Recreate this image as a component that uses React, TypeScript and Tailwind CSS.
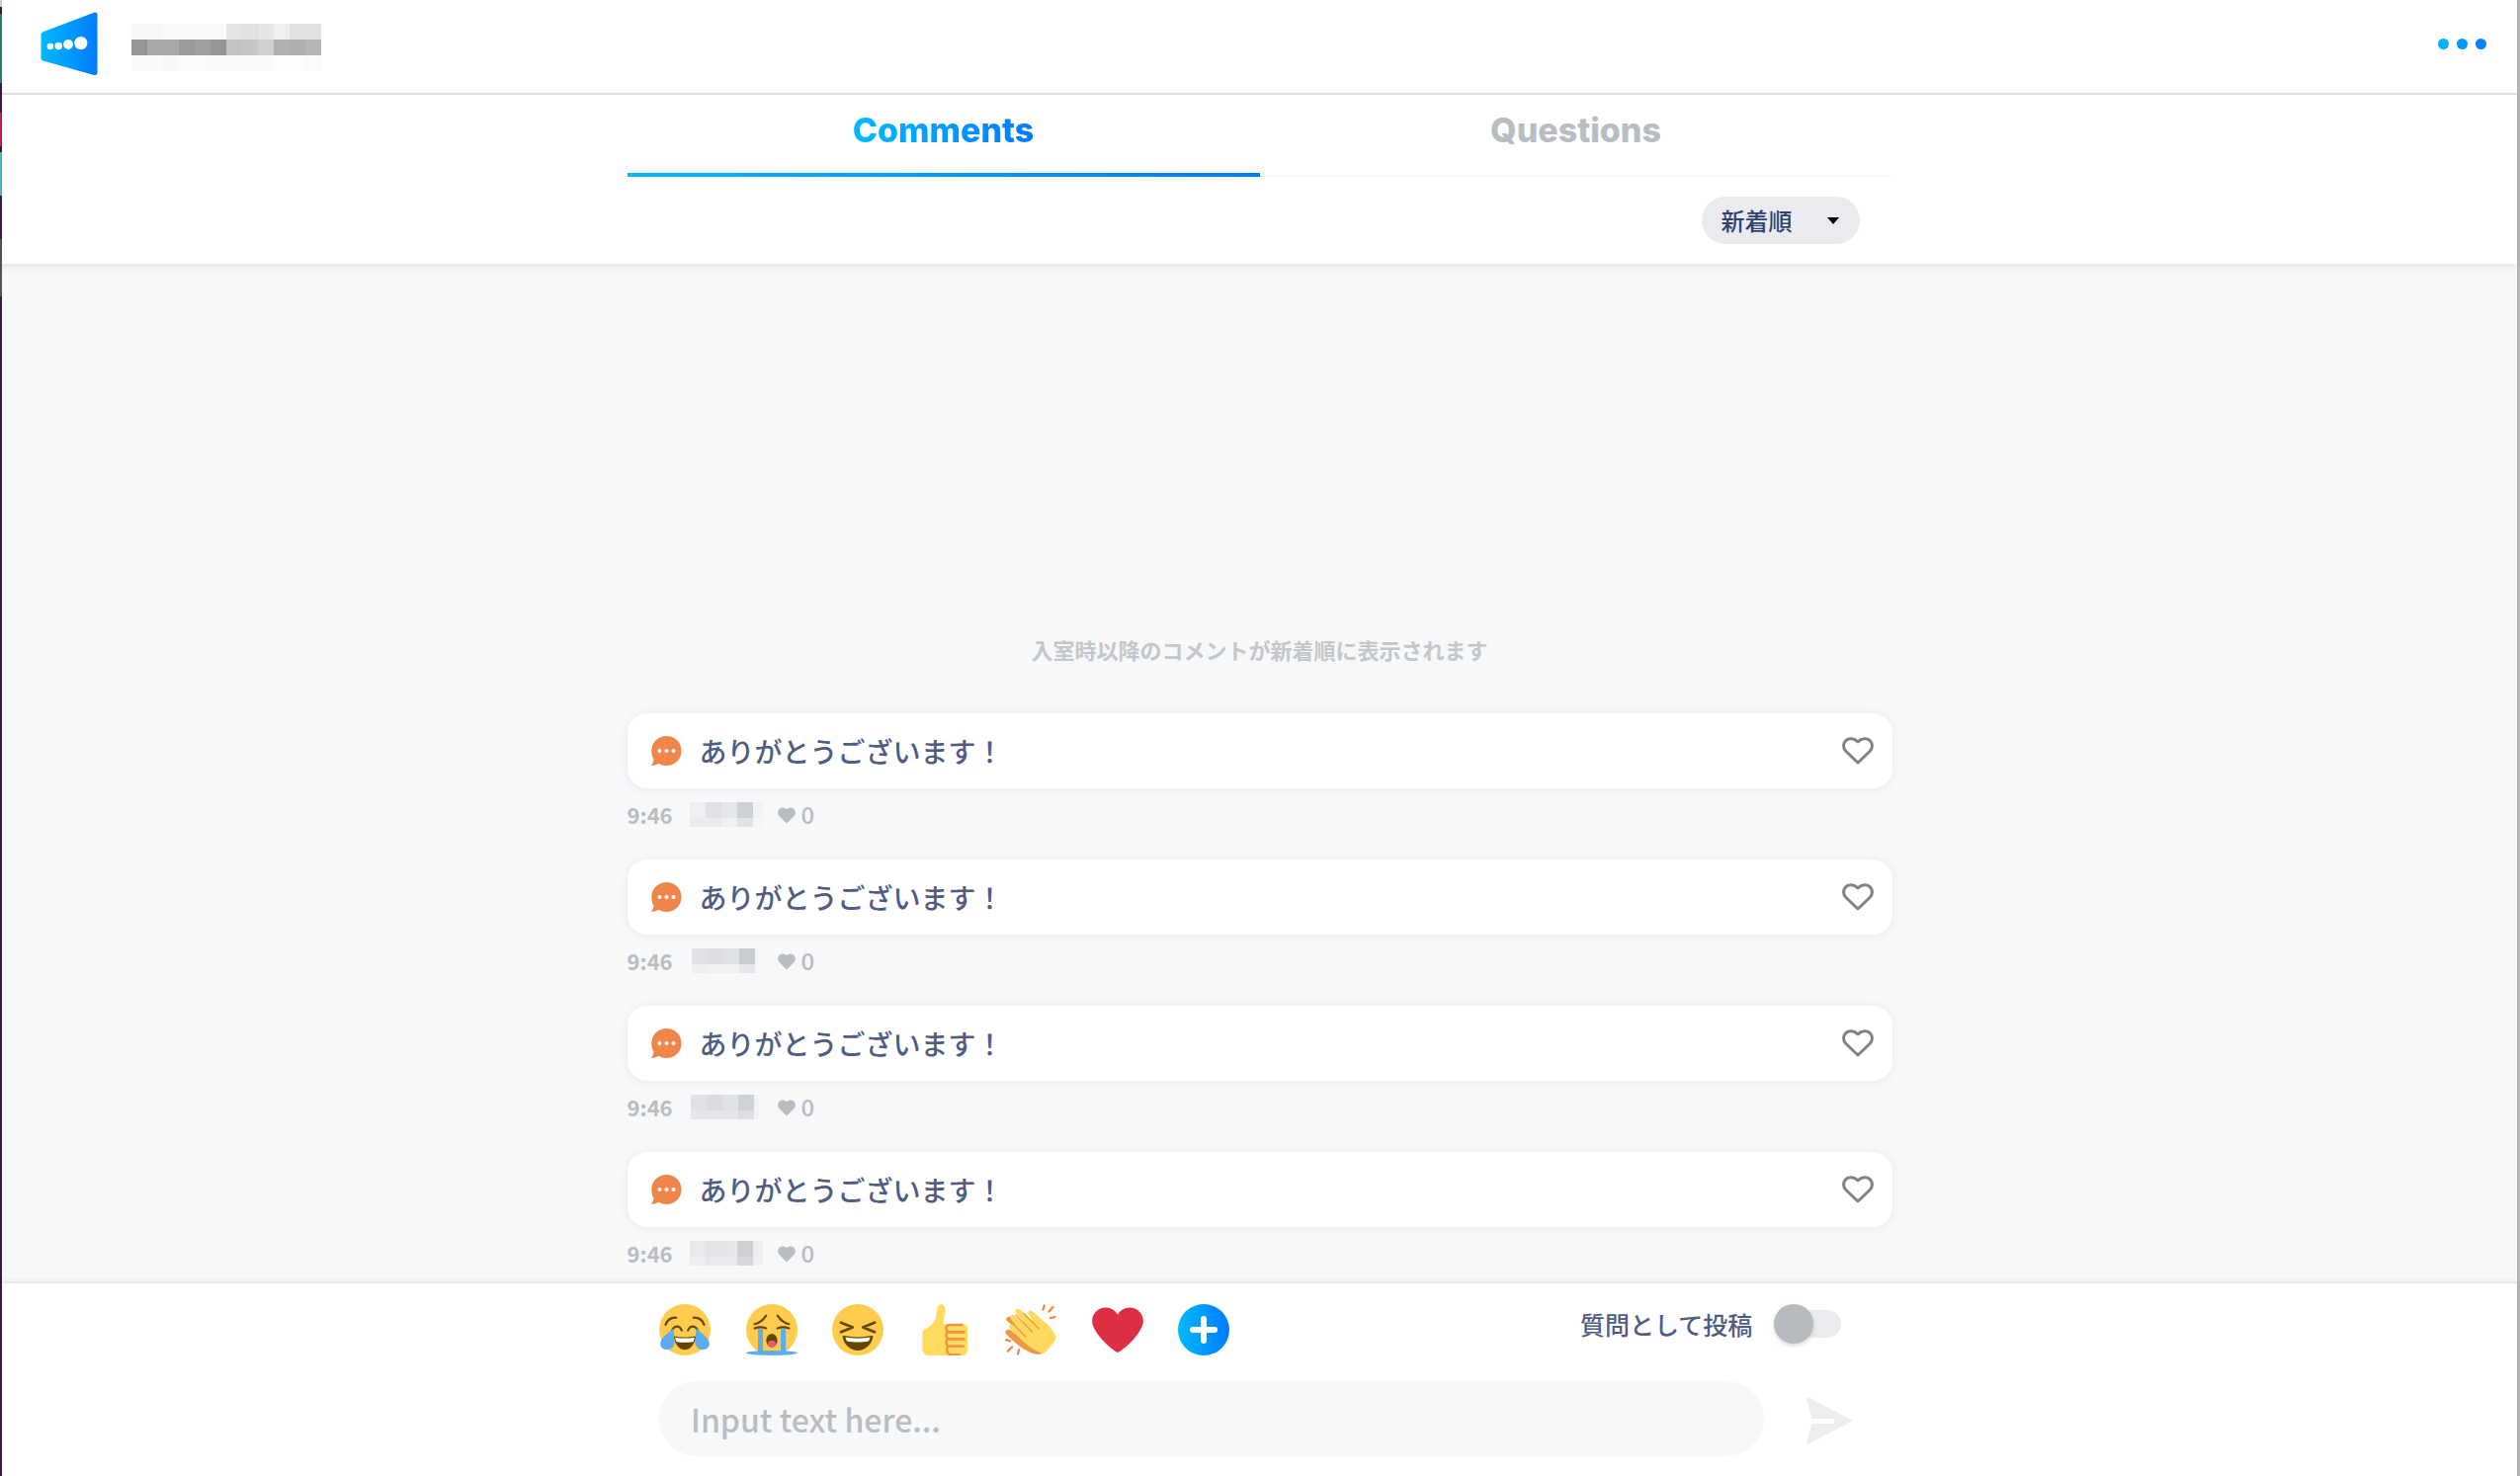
import React from 'react';

const jp = { fontFamily: '"Noto Sans CJK JP", "Noto Sans", sans-serif' };

const headerMosaic = [
  ['#f7f7f7', '#f7f7f7', '#f9f9f9', '#fafafa', '#fafafa', '#f9f9f9', '#e5e5e5', '#e2e2e2', '#e6e6e6', '#f0f0f0', '#e2e2e2', '#e2e2e2'],
  ['#959595', '#a9a9a9', '#a9a9a9', '#9b9b9b', '#a0a0a0', '#959595', '#c3c3c3', '#c6c6c6', '#d0d0d0', '#b0b0b0', '#aeaeae', '#b6b6b6'],
  ['#fafafa', '#fafafa', '#f8f8f8', '#fbfbfb', '#fbfbfb', '#fafafa', '#fafafa', '#fafafa', '#fafafa', '#fdfdfd', '#fdfdfd', '#fbfbfb'],
];

const metaMosaics = [
  { offset: 0, width: 74, rows: [['#eeeff1', '#dfe1e4', '#e6e7ea', '#cdd0d4', '#f1f2f4'], ['#e9eaed', '#e9eaed', '#eff0f2', '#e0e2e5', '#f4f5f7']] },
  { offset: 2, width: 68, rows: [['#e0e2e5', '#dcdee2', '#dfe1e4', '#c9ccd0', '#f3f4f6'], ['#eceef0', '#f0f1f3', '#f0f1f3', '#e6e7ea', '#f5f6f8']] },
  { offset: 1, width: 69, rows: [['#e0e2e5', '#dadce0', '#e0e2e5', '#ced1d5', '#f2f3f5'], ['#e4e6e9', '#e4e6e9', '#e4e6e9', '#dcdee2', '#f2f3f5']] },
  { offset: 0, width: 74, rows: [['#e8e9ec', '#e3e5e8', '#e6e7ea', '#ccd0d4', '#eceef0'], ['#eceef0', '#e8e9ec', '#e8e9ec', '#d6d8dc', '#eff0f2']] },
];

function Mosaic({ rows, cell, className }: { rows: string[][]; cell: number; className?: string }) {
  return (
    <div className={className}>
      {rows.map((row, i) => (
        <div key={i} className="flex">
          {row.map((c, j) => (
            <div key={j} className="shrink-0" style={{ width: cell, height: cell, background: c }} />
          ))}
        </div>
      ))}
    </div>
  );
}

function Logo() {
  return (
    <svg width="59" height="65" viewBox="0 0 60 66" className="shrink-0">
      <defs>
        <linearGradient id="logoGrad" x1="0" x2="1" y1="0" y2="0">
          <stop offset="0" stopColor="#00b9ff" />
          <stop offset="1" stopColor="#007bff" />
        </linearGradient>
      </defs>
      <path d="M2.500 20.500 L55 .6 Q58.500 0 58.500 3 V62.500 Q58.500 65.700 55 65 L2.500 50.300 Q0.500 49.500 0.500 47.500 V23 Q0.500 21.300 2.500 20.500 Z" fill="url(#logoGrad)" />
      <circle cx="10" cy="35.500" r="3.300" fill="#fff" />
      <circle cx="18.500" cy="35" r="3.800" fill="#fff" />
      <circle cx="28.500" cy="33.500" r="5" fill="#fff" />
      <circle cx="41.500" cy="32" r="6.700" fill="#fff" />
    </svg>
  );
}

function BubbleIcon() {
  return (
    <svg width="31" height="30" viewBox="0 0 31 30" className="shrink-0">
      <path d="M15.500 0 C24 0 30.500 6.500 30.500 15 C30.500 23.500 24 30 15.500 30 C12.500 30 9.800 29.200 7.500 27.800 C5.500 29 3 29.700 0 30 C1.500 28 2.200 25.800 2.500 23.500 C1 21.300 0.300 18.300 0.300 15 C0.300 6.500 7 0 15.500 0 Z" fill="#f0854a" />
      <circle cx="8.500" cy="15" r="2" fill="#fff" />
      <circle cx="15.500" cy="15" r="2" fill="#fff" />
      <circle cx="22.500" cy="15" r="2" fill="#fff" />
    </svg>
  );
}

function HeartOutline() {
  return (
    <svg width="32" height="28" viewBox="0 0 32 28" className="shrink-0">
      <path d="M16 26 L4 14.500 C0.500 11 1 6 4 3.500 C7 1 12 1 16 4.800 C20 1 25 1 28 3.500 C31 6 31.500 11 28 14.500 Z" fill="none" stroke="#7e8389" strokeWidth="3" strokeLinejoin="round" />
    </svg>
  );
}

function SmallHeart() {
  return (
    <svg width="18" height="17" viewBox="0 0 18 17" className="mt-[2px] shrink-0">
      <path d="M9 16.500 L1.500 9 C-0.500 6.500 0 3 2 1.500 C4 0 7 0 9 2.500 C11 0 14 0 16 1.500 C18 3 18.500 6.500 16.500 9 Z" fill="#b8bdc3" />
    </svg>
  );
}

function JoyEmoji() {
  return (
    <svg width="52" height="52" viewBox="0 0 36 36">
      <circle cx="18" cy="18" r="18" fill="#ffcc4d" />
      <path d="M11 22.500c2.300.5 4.500.7 7 .7s4.700-.2 7-.7c.5 0 .8.300.7.900C25 28 22 32 18 32s-7-4-7.700-8.600c-.1-.6.200-.9.700-.9z" fill="#664500" />
      <path d="M11.300 23.300c2.200.4 4.300.6 6.700.6s4.500-.2 6.700-.6c0 1.200-.4 2.300-.8 3.100-1.800.4-3.700.5-5.900.5s-4.100-.1-5.900-.5c-.4-.8-.8-1.900-.8-3.100z" fill="#fff" />
      <path d="M4.500 14.500C5.500 11.500 8 9.300 12 9.500M31.500 14.500C30.500 11.500 28 9.300 24 9.500" fill="none" stroke="#664500" strokeWidth="1.500" strokeLinecap="round" />
      <path d="M9 18.500c1-2 2.300-2.800 3.500-2.800s2.500.8 3.300 2.800M20.200 18.500c.8-2 2.100-2.800 3.300-2.800s2.500.8 3.500 2.800" fill="none" stroke="#664500" strokeWidth="1.500" strokeLinecap="round" />
      <path d="M10 17c-3.500 3-9.200 7-9.200 10.700C.8 30.500 3 32 5.500 32s5.200-1.800 5.200-5c0-3-.4-7-.7-10z" fill="#5dadec" />
      <path d="M26 17c3.500 3 9.200 7 9.200 10.700 0 2.800-2.200 4.300-4.700 4.300s-5.200-1.800-5.200-5c0-3 .4-7 .7-10z" fill="#5dadec" />
    </svg>
  );
}

function SobEmoji() {
  return (
    <svg width="52" height="52" viewBox="0 0 36 36">
      <circle cx="18" cy="18" r="18" fill="#ffcc4d" />
      <path d="M6 14c3.500-.8 6-3 8-6M30 14c-3.500-.8-6-3-8-6" fill="none" stroke="#664500" strokeWidth="1.500" strokeLinecap="round" />
      <path d="M6 17c2.500-1 5.500-1 8 0M22 17c2.500-1 5.500-1 8 0" fill="none" stroke="#664500" strokeWidth="1.500" strokeLinecap="round" />
      <ellipse cx="18" cy="25.500" rx="3.900" ry="4.700" fill="#664500" />
      <ellipse cx="18" cy="27.800" rx="2.800" ry="2.300" fill="#e75a70" />
      <path d="M8.300 17.500h3.500V34H8.300zM24.300 17.500h3.500V34h-3.500z" fill="#5dadec" />
      <ellipse cx="18" cy="34.200" rx="18" ry="1.700" fill="#5dadec" />
    </svg>
  );
}

function LaughEmoji() {
  return (
    <svg width="52" height="52" viewBox="0 0 36 36">
      <circle cx="18" cy="18" r="18" fill="#ffcc4d" />
      <path d="M8.500 22.200c3 .6 6 1 9.500 1s6.500-.4 9.500-1c.8-.1 1.200.3 1.100 1C27.800 28 23.500 32.500 18 32.500S8.200 28 7.400 23.200c-.1-.7.300-1.100 1.100-1z" fill="#664500" />
      <path d="M9.300 23.200c2.800.5 5.500.8 8.700.8s5.900-.3 8.700-.8c-.2 1-.6 1.900-1.100 2.700-2.300.5-4.700.7-7.600.7s-5.300-.2-7.600-.7c-.5-.8-.9-1.700-1.100-2.700z" fill="#fff" />
      <path d="M6.200 13l8.200 3.300-8.200 3.200M29.800 13l-8.200 3.300 8.200 3.200" fill="none" stroke="#664500" strokeWidth="1.900" strokeLinecap="round" strokeLinejoin="round" />
    </svg>
  );
}

function ThumbEmoji() {
  return (
    <svg width="52" height="52" viewBox="0 0 36 36">
      <path d="M4 17.500c3-1.300 6-3.500 7.500-7.500 1-3 .3-7.500 2.800-9.500 1.700-1 3.700.3 4 2.500.5 4-1.300 7.500-1.300 11h13c2.500 0 4 1 4 3v15c0 2.500-1.500 4-4 4H7c-2 0-3.300-.7-4-2-.5-1-.7-2-.7-3V20.500c0-1.300.5-2.300 1.700-3z" fill="#ffdb5e" />
      <g fill="none" stroke="#ef9645" strokeWidth="1.700" strokeLinecap="round">
        <path d="M30 14.500h-8.500c-1.500 0-2.500 1-2.500 2.500s1 2.500 2.500 2.500h10" />
        <path d="M31.500 19.500h-10c-1.500 0-2.500 1-2.500 2.500s1 2.500 2.500 2.500h10" />
        <path d="M31.500 24.500h-10c-1.500 0-2.500 1-2.500 2.500s1 2.500 2.500 2.500h9.500" />
        <path d="M30.500 29.500h-8.500c-1.500 0-2.500 1-2.500 2.500s1 3 2.500 3.500h6.500" />
      </g>
    </svg>
  );
}

function ClapEmoji() {
  return (
    <svg width="52" height="52" viewBox="0 0 36 36">
      <path d="M1.200 9.500c1-1.200 2.500-1.200 3.700-.2l3 2.700-2 3.500-4.300-3.500c-1-.8-1.200-1.700-.4-2.500z" fill="#ef9645" />
      <path d="M.8 18.500c1-1 2.400-1 3.500 0l9 7.500c4 3.300 8.500 6 13.500 8.500-3 1.300-6 .8-9-.5C11 31 5.500 26 .8 21c-.7-.8-.7-1.700 0-2.500z" fill="#ef9645" />
      <path d="M4 10.500c-1-1.700 1-3.700 2.700-2.500L15 15 7.500 6c-1.200-1.600 1-3.600 2.600-2.400l9.200 8-3-4.600c-1-1.700 1.200-3.300 2.700-2.100L30 14.500c2 1.800 4 5 6 8.700l-2 3.800c-2 2.700-4.500 5.500-7 7.800-5.500-1.500-11-5-15.500-9.800L3.300 17c-1.300-1.700.7-3.700 2.400-2.500l4.300 3.500z" fill="#ffd95c" />
      <path d="M7.500 7.500L19 19.500M13 6.500L23.500 17M5.500 13.500L14.500 23" fill="none" stroke="#ef9645" strokeWidth=".9" strokeLinecap="round" />
      <path d="M27.500 1l-.9 3M33.500 2l-2.700 3.300M35 9l-3.200.7M.8 25l2.700.9M1.800 33l3.200-3M9 35l.7-3" fill="none" stroke="#ff7d3a" strokeWidth="1.500" strokeLinecap="round" />
    </svg>
  );
}

function HeartEmoji() {
  return (
    <svg width="52" height="52" viewBox="0 0 36 36">
      <path d="M35.900 12c0-5.300-4.300-9.500-9.500-9.500-3.600 0-6.800 2-8.400 5-1.600-3-4.800-5-8.400-5C4.400 2.500.100 6.700.100 12c0 1.500.4 2.900 1 4.100C5.300 25 14 31.900 18 34c4-2.100 12.700-9 16.900-17.900.6-1.200 1-2.600 1-4.100z" fill="#dd2e44" />
    </svg>
  );
}

function PlusEmoji() {
  return (
    <svg width="52" height="52" viewBox="0 0 52 52">
      <defs>
        <linearGradient id="plusGrad" x1="0" x2="1" y1="0" y2="0">
          <stop offset="0" stopColor="#00b9ff" />
          <stop offset="1" stopColor="#007bff" />
        </linearGradient>
      </defs>
      <circle cx="26" cy="26" r="26" fill="url(#plusGrad)" />
      <path d="M26 15v22M15 26h22" stroke="#fff" strokeWidth="6" strokeLinecap="round" />
    </svg>
  );
}

function SendIcon() {
  return (
    <svg width="48" height="48" viewBox="0 0 48 48" className="shrink-0">
      <path d="M2 0.500 L47 24 L2 47.500 Q0 48 0 46 L5.500 27 H28 V22 H5.500 L0 2 Q0 0 2 0.500 Z" fill="#ebedef" />
    </svg>
  );
}

function CommentRow({ mosaic }: { mosaic: (typeof metaMosaics)[0] }) {
  return (
    <div className="mb-[30px] last:mb-[14px]">
      <div className="flex h-[76px] items-center justify-between rounded-[20px] bg-white pl-[24px] pr-[19px] shadow-[0_1px_8px_rgba(40,50,80,0.08)]">
        <div className="flex items-center gap-[18px]">
          <BubbleIcon />
          <span className="text-[28px] font-medium text-[#4f5d83]" style={jp}>ありがとうございます！</span>
        </div>
        <HeartOutline />
      </div>
      <div className="mt-[10px] flex h-[32px] items-center text-[22px] font-bold text-[#b8bdc3]" style={jp}>
        <span className="w-[63px]">9:46</span>
        <div className="w-[89px]">
          <div className="h-[25px] overflow-hidden" style={{ marginLeft: mosaic.offset, width: mosaic.width }}>
            <Mosaic rows={mosaic.rows} cell={16} />
          </div>
        </div>
        <SmallHeart />
        <span className="ml-[6px] text-[24px] font-medium">0</span>
      </div>
    </div>
  );
}

export default function App() {
  return (
    <div className="flex h-[1494px] w-[2550px] overflow-hidden bg-white">
      {/* desktop peeking out behind the window */}
      <div className="flex w-[2px] shrink-0 flex-col">
        <div className="h-[7px] bg-[#cccccc]" />
        <div className="h-[7px] bg-[#3a1a45]" />
        <div className="h-[70px] bg-[#2f7a68]" />
        <div className="h-[30px] bg-[#3a1a45]" />
        <div className="h-[34px] bg-[#c0214f]" />
        <div className="h-[6px] bg-[#3a1a45]" />
        <div className="h-[44px] bg-[#4fb6cc]" />
        <div className="h-[44px] bg-[#3a1a45]" />
        <div className="h-[58px] bg-[#555555]" />
        <div className="flex-1 bg-[#3a1a45]" />
      </div>

      <div className="flex min-w-0 flex-1 flex-col">
        <header className="flex h-[96px] shrink-0 items-center justify-between border-b-2 border-[#e4e4e4] pb-[5px] pl-[39px] pr-[31px]">
          <div className="flex items-center gap-[33px]">
            <Logo />
            <Mosaic rows={headerMosaic} cell={16} className="mt-[7px]" />
          </div>
          <div className="flex gap-[8px]">
            <div className="h-[11px] w-[11px] rounded-full bg-[#00b4ff]" />
            <div className="h-[11px] w-[11px] rounded-full bg-[#0099ff]" />
            <div className="h-[11px] w-[11px] rounded-full bg-[#0082ff]" />
          </div>
        </header>

        <div className="relative z-10 flex h-[171px] shrink-0 flex-col items-center bg-white shadow-[0_2px_8px_rgba(40,50,80,0.12)]">
          <div className="flex h-[83px] w-[1280px] shrink-0">
            <div className="flex w-[640px] flex-col">
              <div className="flex flex-1 items-center justify-center pb-[8px]">
                <span className="bg-gradient-to-r from-[#00b9ff] to-[#007bff] bg-clip-text text-[34px] font-extrabold text-transparent" style={{ fontFamily: 'Inter, sans-serif' }}>Comments</span>
              </div>
              <div className="h-[4px] bg-gradient-to-r from-[#00b9ff] to-[#007bff]" />
            </div>
            <div className="flex w-[640px] flex-col">
              <div className="flex flex-1 items-center justify-center pb-[11px]">
                <span className="text-[34px] font-extrabold text-[#b8bdc3]" style={{ fontFamily: 'Inter, sans-serif' }}>Questions</span>
              </div>
              <div className="h-px bg-[#f5f5f5]" />
            </div>
          </div>
          <div className="flex w-[1280px] justify-end pr-[33px] pt-[20px]">
            <div className="flex h-[48px] w-[160px] items-center justify-between rounded-[24px] bg-[#e9ebee] pl-[20px] pr-[21px]">
              <span className="text-[24px] font-medium text-[#2f4173]" style={jp}>新着順</span>
              <div className="h-0 w-0 border-x-[6px] border-t-[7px] border-x-transparent border-t-black" />
            </div>
          </div>
        </div>

        <main className="flex min-h-0 flex-1 flex-col items-center justify-end overflow-hidden bg-[#f7f8fa]">
          <p className="mb-[48px] text-[22px] font-bold text-[#c3c7cc]" style={jp}>入室時以降のコメントが新着順に表示されます</p>
          <div className="w-[1280px]">
            {metaMosaics.map((m, i) => (
              <CommentRow key={i} mosaic={m} />
            ))}
          </div>
        </main>

        <footer className="relative z-10 flex h-[196px] shrink-0 flex-col border-t border-[#e6e7ea] bg-white pl-[665px] shadow-[0_-1px_4px_rgba(40,50,80,0.1)]">
          <div className="flex h-[99px] items-start pt-[21px]">
            <div className="flex w-[578px] items-center gap-[35.500px]">
              <JoyEmoji />
              <SobEmoji />
              <LaughEmoji />
              <ThumbEmoji />
              <ClapEmoji />
              <HeartEmoji />
              <PlusEmoji />
            </div>
            <div className="ml-[354px] flex items-center">
              <span className="text-[25px] font-medium leading-[40px] text-[#4f5d83]" style={jp}>質問として投稿</span>
              <div className="relative ml-[22px] h-[28px] w-[68px] rounded-full bg-[#e9ebee]">
                <div className="absolute -top-[6px] left-0 h-[40px] w-[40px] rounded-full bg-[#b6bbc0] shadow-[0_2px_4px_rgba(0,0,0,0.15)]" />
              </div>
            </div>
          </div>
          <div className="flex items-center">
            <div className="flex h-[76px] w-[1118px] items-center rounded-[38px] bg-[#f7f8fa] pl-[32px]">
              <span className="text-[32px] font-medium text-[#b8bdc3]" style={jp}>Input text here...</span>
            </div>
            <div className="ml-[43px] mt-[4px]">
              <SendIcon />
            </div>
          </div>
        </footer>
      </div>

      <div className="w-[3px] shrink-0 bg-[#b5b5b5]" />
    </div>
  );
}
